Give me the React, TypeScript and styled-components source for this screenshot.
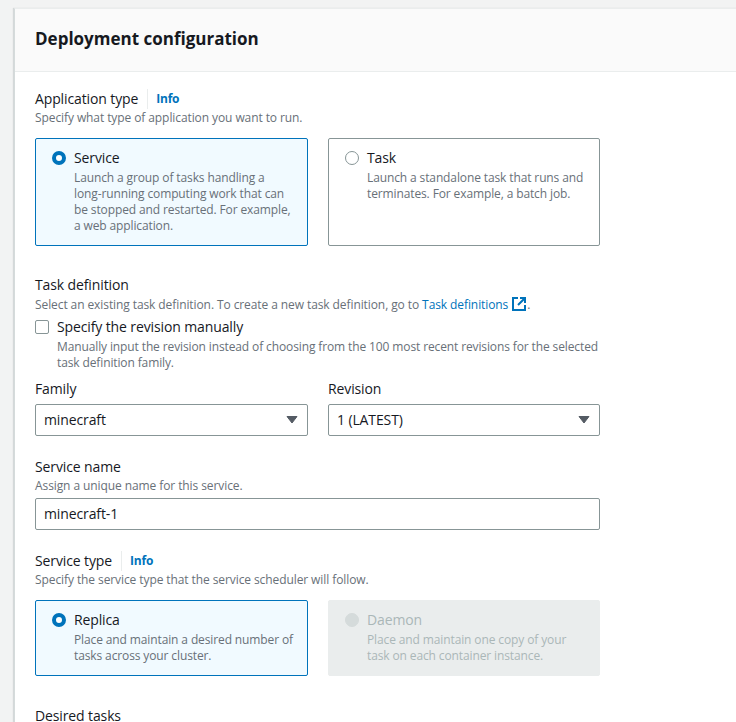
import React from "react";
import styled, { createGlobalStyle } from "styled-components";

const Global = createGlobalStyle`
  html, body { margin: 0; padding: 0; background: #f2f3f3; height: 722px; overflow: hidden; }
  body { font-family: "Open Sans", "Noto Sans", sans-serif; color: #16191f; font-size: 14px; }
`;
const Page = styled.div`
  padding: 8px 0 0 14px;
  height: 714px;
  overflow: hidden;
`;
const Card = styled.section`
  width: 760px;
  background: #fff;
  border-left: 1px solid #d5dbdb;
  border-top: 1px solid #eaeded;
  box-shadow: -1px 0 1px rgba(0, 28, 36, 0.12);
`;
const Header = styled.header`
  height: 62px;
  background: #fafafa;
  border-bottom: 1px solid #eaeded;
  padding: 0 20px;
  display: flex;
  align-items: center;
`;
const Title = styled.h2`
  margin: 0 0 2px;
  font-size: 17px;
  line-height: 24px;
  font-weight: 700;
  color: #16191f;
`;
const Body = styled.div`
  width: 565px;
  padding: 16px 0 0 20px;
  display: flex;
  flex-direction: column;
`;
const Field = styled.div<{ $gap?: number }>`
  margin-bottom: ${(p) => p.$gap ?? 0}px;
`;
const LabelRow = styled.div`
  display: flex;
  align-items: center;
  height: 22px;
`;
const Label = styled.span`
  font-size: 14px;
  line-height: 22px;
  letter-spacing: -0.12px;
  color: #16191f;
`;
const InfoLink = styled.a`
  margin-left: 9px;
  padding-left: 8px;
  border-left: 1px solid #eaeded;
  font-size: 12px;
  line-height: 20px;
  letter-spacing: -0.2px;
  font-weight: 700;
  color: #0073bb;
`;
const Hint = styled.div`
  font-size: 12px;
  line-height: 16px;
  letter-spacing: -0.09px;
  color: #687078;
`;
const TextLink = styled.a`
  color: #0073bb;
`;
const NoBreak = styled.span`
  white-space: nowrap;
`;
const ExtIcon = styled.svg`
  width: 16px;
  height: 16px;
  margin-left: 3px;
  vertical-align: -3px;
`;
const Tiles = styled.div`
  display: grid;
  grid-template-columns: 273px 272px;
  column-gap: 20px;
  margin-top: 12px;
`;
const Tile = styled.div<{ $state?: "selected" | "disabled"; $h: number }>`
  box-sizing: border-box;
  height: ${(p) => p.$h}px;
  border-radius: 2px;
  padding: 8px 9px 0 16px;
  display: flex;
  border: 1px solid
    ${(p) => (p.$state === "selected" ? "#0073bb" : p.$state === "disabled" ? "#eaeded" : "#879596")};
  background: ${(p) => (p.$state === "selected" ? "#f1faff" : p.$state === "disabled" ? "#eaeded" : "#fff")};
`;
const Radio = styled.span<{ $state?: "selected" | "disabled" }>`
  box-sizing: border-box;
  flex: none;
  width: 14px;
  height: 14px;
  margin-top: 4px;
  margin-right: 8px;
  border-radius: 50%;
  background: ${(p) => (p.$state === "disabled" ? "#d5dbdb" : "#fff")};
  border: ${(p) =>
    p.$state === "selected"
      ? "4px solid #0073bb"
      : p.$state === "disabled"
        ? "1px solid #d5dbdb"
        : "1px solid #879596"};
`;
const TileText = styled.div`
  min-width: 0;
`;
const TileLabel = styled.div<{ $disabled?: boolean }>`
  font-size: 14px;
  line-height: 22px;
  letter-spacing: -0.12px;
  color: ${(p) => (p.$disabled ? "#aab7b8" : "#16191f")};
`;
const TileHint = styled.div<{ $disabled?: boolean }>`
  margin-top: 1px;
  font-size: 12px;
  line-height: 16px;
  letter-spacing: -0.12px;
  color: ${(p) => (p.$disabled ? "#aab7b8" : "#687078")};
`;
const CheckRow = styled.div`
  display: flex;
  margin-top: 3px;
`;
const Checkbox = styled.span`
  box-sizing: border-box;
  flex: none;
  width: 14px;
  height: 14px;
  margin-top: 4px;
  margin-right: 8px;
  border: 1px solid #879596;
  border-radius: 2px;
  background: #fff;
`;
const Columns = styled.div`
  display: grid;
  grid-template-columns: 273px 272px;
  column-gap: 20px;
  margin-top: 7px;
`;
const ColumnLabel = styled.div`
  font-size: 14px;
  line-height: 22px;
  letter-spacing: -0.12px;
  color: #16191f;
`;
const Control = styled.div`
  box-sizing: border-box;
  height: 32px;
  border: 1px solid #879596;
  border-radius: 2px;
  background: #fff;
  padding: 0 9px 0 8px;
  display: flex;
  align-items: center;
  justify-content: space-between;
  font-size: 14px;
  line-height: 22px;
  letter-spacing: -0.12px;
  color: #16191f;
`;
const Caret = styled.svg`
  width: 12px;
  height: 9px;
  margin-bottom: 2px;
`;
const ControlSpaced = styled.div<{ $top: number }>`
  margin-top: ${(p) => p.$top}px;
`;

const Select = ({ value }: { value: string }) => (
  <ControlSpaced $top={4}>
    <Control>
      <span>{value}</span>
      <Caret viewBox="0 0 12 9">
        <path d="M1 1.5h10L6 8z" fill="#545b64" stroke="#545b64" strokeLinejoin="round" />
      </Caret>
    </Control>
  </ControlSpaced>
);

export default function App() {
  return (
    <>
      <Global />
      <Page>
        <Card>
          <Header>
            <Title>Deployment configuration</Title>
          </Header>
          <Body>
            <Field $gap={28}>
              <LabelRow>
                <Label>Application type</Label>
                <InfoLink>Info</InfoLink>
              </LabelRow>
              <Hint>Specify what type of application you want to run.</Hint>
              <Tiles>
                <Tile $state="selected" $h={108}>
                  <Radio $state="selected" />
                  <TileText>
                    <TileLabel>Service</TileLabel>
                    <TileHint>
                      Launch a group of tasks handling a <NoBreak>long-running</NoBreak> computing work that can be stopped and restarted. For example, a web application.
                    </TileHint>
                  </TileText>
                </Tile>
                <Tile $h={108}>
                  <Radio />
                  <TileText>
                    <TileLabel>Task</TileLabel>
                    <TileHint>Launch a standalone task that runs and terminates. For example, a batch job.</TileHint>
                  </TileText>
                </Tile>
              </Tiles>
            </Field>
            <Field $gap={20}>
              <LabelRow>
                <Label>Task definition</Label>
              </LabelRow>
              <Hint>
                Select an existing task definition. To create a new task definition, go to{" "}
                <TextLink>Task definitions</TextLink>
                <ExtIcon viewBox="0 0 16 16" fill="none">
                  <path d="M7 2H2v12h12V9" stroke="#0073bb" strokeWidth="2" />
                  <path d="M9 2h5v5M14 2L7 9" stroke="#0073bb" strokeWidth="2" />
                </ExtIcon>
                .
              </Hint>
              <CheckRow>
                <Checkbox />
                <TileText>
                  <TileLabel>Specify the revision manually</TileLabel>
                  <TileHint>
                    Manually input the revision instead of choosing from the 100 most recent revisions for the selected task definition family.
                  </TileHint>
                </TileText>
              </CheckRow>
              <Columns>
                <div>
                  <ColumnLabel>Family</ColumnLabel>
                  <Select value="minecraft" />
                </div>
                <div>
                  <ColumnLabel>Revision</ColumnLabel>
                  <Select value="1 (LATEST)" />
                </div>
              </Columns>
            </Field>
            <Field $gap={20}>
              <LabelRow>
                <Label>Service name</Label>
              </LabelRow>
              <Hint>Assign a unique name for this service.</Hint>
              <ControlSpaced $top={4}>
                <Control>minecraft-1</Control>
              </ControlSpaced>
            </Field>
            <Field $gap={29}>
              <LabelRow>
                <Label>Service type</Label>
                <InfoLink>Info</InfoLink>
              </LabelRow>
              <Hint>Specify the service type that the service scheduler will follow.</Hint>
              <Tiles>
                <Tile $state="selected" $h={76}>
                  <Radio $state="selected" />
                  <TileText>
                    <TileLabel>Replica</TileLabel>
                    <TileHint>Place and maintain a desired number of tasks across your cluster.</TileHint>
                  </TileText>
                </Tile>
                <Tile $state="disabled" $h={76}>
                  <Radio $state="disabled" />
                  <TileText>
                    <TileLabel $disabled>Daemon</TileLabel>
                    <TileHint $disabled>Place and maintain one copy of your task on each container instance.</TileHint>
                  </TileText>
                </Tile>
              </Tiles>
            </Field>
            <LabelRow>
              <Label>Desired tasks</Label>
            </LabelRow>
          </Body>
        </Card>
      </Page>
    </>
  );
}
